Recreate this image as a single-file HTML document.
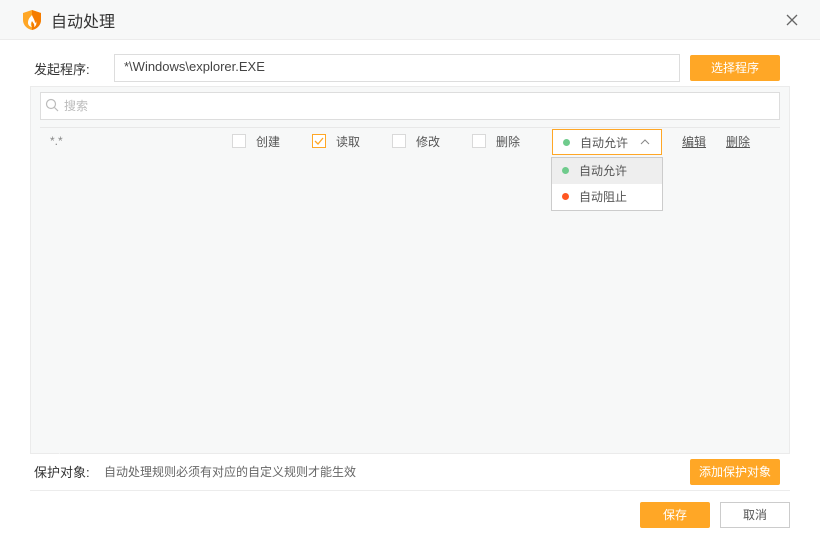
<!DOCTYPE html><html><head><meta charset="utf-8"><style>
*{margin:0;padding:0;box-sizing:border-box}
body{width:820px;height:540px;background:#fff;font-family:"Liberation Sans","Noto Sans CJK SC",sans-serif;font-size:12px;color:#555;position:relative;overflow:hidden}
.a{position:absolute}
.btn{position:absolute;background:#ffa726;color:#fff;text-align:center;border-radius:2px;font-size:12px}
.cb{position:absolute;width:14px;height:14px;border:1px solid #d9d9d9;background:#fff;top:134px}
.dot{display:inline-block;width:7px;height:7px;border-radius:50%;margin-right:10px;vertical-align:1px}
</style></head><body>
<div class="a" style="left:0;top:0;width:820px;height:40px;background:#f7f8f8;border-bottom:1px solid #ececec"></div>
<svg class="a" style="left:22px;top:9px" width="20" height="22" viewBox="0 0 20 22"><path d="M10 1L1 4v7c0 5 4 9 9 10c5-1 9-5 9-10V4z" fill="#ffa726"/><path d="M10 1L19 4v7c0 5-4 9-9 10z" fill="#f57c00"/><path d="M10 6c-3 3-4 5-4 8c0 2 2 4 4 4c-1-1-2-3 0-6c1 2 3 3 2 6c2-1 3-3 2-6c0 2-1 2-1 2c0-3-2-5-3-8z" fill="#fff"/></svg>
<div class="a" style="left:51px;top:8px;font-size:16px;color:#333">自动处理</div>
<svg class="a" style="left:786px;top:14px" width="12" height="12"><path d="M1 1L11 11M11 1L1 11" stroke="#666" stroke-width="1.3"/></svg>
<div class="a" style="left:34px;top:59px;font-size:13px;color:#333">发起程序:</div>
<div class="a" style="left:114px;top:54px;width:566px;height:28px;border:1px solid #ddd;padding:4px 9px;font-size:13px;color:#444">*\Windows\explorer.EXE</div>
<div class="btn" style="left:690px;top:55px;width:90px;height:26px;line-height:26px">选择程序</div>
<div class="a" style="left:30px;top:86px;width:760px;height:368px;background:#f7f8f8;border:1px solid #ebebeb"></div>
<svg class="a" style="left:30px;top:453px" width="30" height="10"><path d="M0 0.5H28L36 0.5" stroke="#ebebeb"/><path d="M29 0L34 8L39 0" fill="#f7f8f8"/></svg>
<div class="a" style="left:40px;top:92px;width:740px;height:28px;border:1px solid #ddd;background:#fff"></div>
<svg class="a" style="left:45px;top:98px" width="14" height="14"><circle cx="6" cy="6" r="4.5" stroke="#bbb" fill="none" stroke-width="1.2"/><path d="M9.5 9.5L13 13" stroke="#bbb" stroke-width="1.2"/></svg>
<div class="a" style="left:64px;top:97px;color:#bbb">搜索</div>
<div class="a" style="left:40px;top:127px;width:740px;height:1px;background:#e8e8e8"></div>
<div class="a" style="left:50px;top:134px;color:#888">*.*</div>
<div class="cb" style="left:232px"></div><div class="a" style="left:256px;top:133px">创建</div>
<div class="cb" style="left:312px;border-color:#ffa726"></div><svg class="a" style="left:314px;top:137px" width="10" height="8"><path d="M1 4l3 3l5-6" stroke="#ffa726" fill="none" stroke-width="1.3"/></svg><div class="a" style="left:336px;top:133px">读取</div>
<div class="cb" style="left:392px"></div><div class="a" style="left:416px;top:133px">修改</div>
<div class="cb" style="left:472px"></div><div class="a" style="left:496px;top:133px">删除</div>
<div class="a" style="left:552px;top:129px;width:110px;height:26px;border:1px solid #ffa726;background:#fff;padding:4px 0 0 10px"><span class="dot" style="background:#6fcb8c"></span>自动允许</div>
<svg class="a" style="left:640px;top:139px" width="10" height="6"><path d="M1 5L5 1L9 5" stroke="#888" fill="none"/></svg>
<div class="a" style="left:682px;top:133px;text-decoration:underline">编辑</div>
<div class="a" style="left:726px;top:133px;text-decoration:underline">删除</div>
<div class="a" style="left:551px;top:157px;width:112px;height:54px;border:1px solid #ccc;background:#fff"></div>
<div class="a" style="left:552px;top:158px;width:110px;height:26px;background:#eee;padding:4px 0 0 10px"><span class="dot" style="background:#6fcb8c"></span>自动允许</div>
<div class="a" style="left:552px;top:184px;width:110px;height:26px;padding:4px 0 0 10px"><span class="dot" style="background:#ff5722"></span>自动阻止</div>
<div class="a" style="left:34px;top:462px;font-size:13px;color:#333">保护对象:</div>
<div class="a" style="left:104px;top:463px;color:#666">自动处理规则必须有对应的自定义规则才能生效</div>
<div class="btn" style="left:690px;top:459px;width:90px;height:26px;line-height:26px">添加保护对象</div>
<div class="a" style="left:30px;top:490px;width:760px;height:1px;background:#ececec"></div>
<div class="btn" style="left:640px;top:502px;width:70px;height:26px;line-height:26px">保存</div>
<div class="a" style="left:720px;top:502px;width:70px;height:26px;line-height:24px;border:1px solid #ccc;text-align:center;color:#555">取消</div>
</body></html>
